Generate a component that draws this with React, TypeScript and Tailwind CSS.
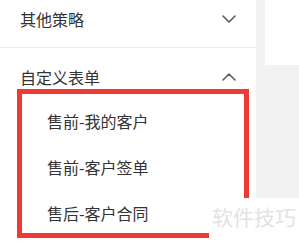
import React from 'react';

const font = { fontFamily: '"Noto Sans CJK SC", "Liberation Sans", sans-serif' };

function Chevron({ up }: { up?: boolean }) {
  return (
    <svg width="14" height="8" viewBox="0 0 14 8" className={up ? 'rotate-180' : ''}>
      <polyline points="1,1 7,7 13,1" fill="none" stroke="#555" strokeWidth="1.5" strokeLinecap="round" strokeLinejoin="round" />
    </svg>
  );
}

export default function App() {
  const items = ['售前-我的客户', '售前-客户签单', '售后-客户合同'];
  return (
    <div className="relative w-[299px] h-[243px] overflow-hidden flex bg-white" style={font}>
      {/* Left menu */}
      <div className="w-[256px] shrink-0 bg-white flex flex-col">
        <div className="h-[48px] pb-[10px] pl-[20px] pr-[20px] flex items-center justify-between border-b border-[#ebebeb]">
          <span className="text-[16px] text-[#333]">其他策略</span>
          <Chevron />
        </div>
        <div className="h-[50px] pt-[8px] pl-[20px] pr-[20px] flex items-center justify-between">
          <span className="text-[16px] text-[#333]">自定义表单</span>
          <Chevron up />
        </div>
        {items.map((t) => (
          <div key={t} className="h-[46px] pl-[47px] flex items-center text-[16px] text-[#333]">
            {t}
          </div>
        ))}
      </div>
      {/* Right area */}
      <div className="flex-1 bg-[#f2f2f2] pl-[9px]">
        <div className="h-[65px] bg-white" />
      </div>

      {/* Red highlight box */}
      <div className="absolute left-[17px] top-[89px] w-[232px] h-[149px] border-[5px] border-[#ef3a34]" />

      {/* Watermark */}
      <div className="absolute left-[209px] top-[198px] right-0 bottom-0 bg-white flex items-start pt-[8px] pl-[3px]">
        <span className="text-[21px] leading-none text-[#e3e3e3]">软件技巧</span>
      </div>
    </div>
  );
}
